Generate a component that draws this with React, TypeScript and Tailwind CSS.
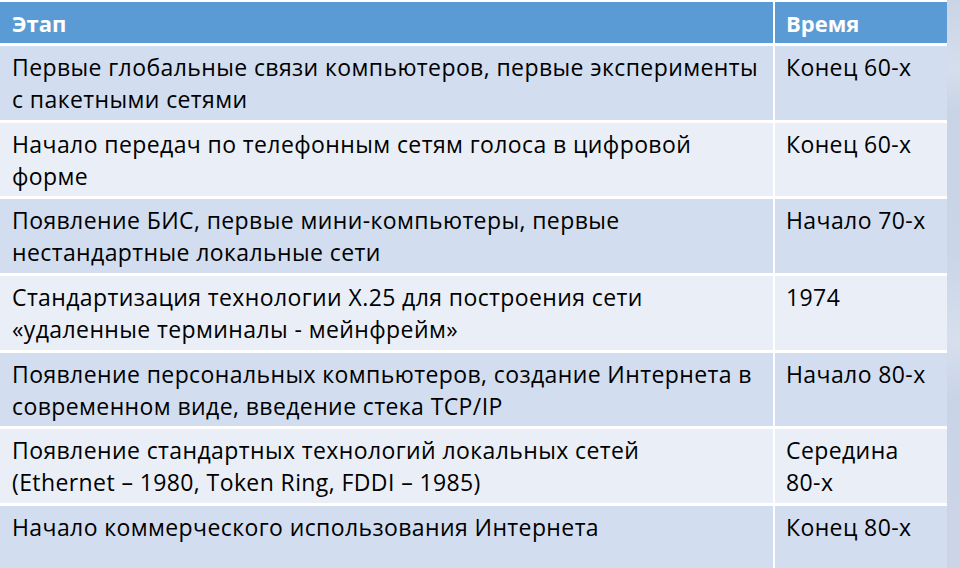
const ROWS = [
  { stage: "Первые глобальные связи компьютеров, первые эксперименты с пакетными сетями", time: "Конец 60-х" },
  { stage: "Начало передач по телефонным сетям голоса в цифровой форме", time: "Конец 60-х" },
  { stage: "Появление БИС, первые мини-компьютеры, первые нестандартные локальные сети", time: "Начало 70-х" },
  { stage: "Стандартизация технологии X.25 для построения сети «удаленные терминалы - мейнфрейм»", time: "1974" },
  { stage: "Появление персональных компьютеров, создание Интернета в современном виде, введение стека TCP/IP", time: "Начало 80-х" },
  // nbsp keeps "(Ethernet –" together, as in the slide
  { stage: "Появление стандартных технологий локальных сетей (Ethernet\u00a0– 1980, Token Ring, FDDI – 1985)", time: "Середина 80-х" },
  { stage: "Начало коммерческого использования Интернета", time: "Конец 80-х" },
];

export default function App() {
  return (
    <div
      className="w-[960px] h-[568px] overflow-hidden flex bg-white"
      style={{ fontFamily: '"Open Sans", "Noto Sans", sans-serif' }}
    >
      <div className="w-[947px] shrink-0 pt-[2px] flex flex-col gap-[3px] bg-white">
        <div className="grid grid-cols-[773px_172px] gap-x-[2px] h-[41px] shrink-0">
          <div className="bg-[#5b9bd5] text-white font-bold text-[22px] leading-[30px] pl-[12px] pt-[6px]">Этап</div>
          <div className="bg-[#5b9bd5] text-white font-bold text-[22px] leading-[30px] pl-[11px] pt-[6px]">Время</div>
        </div>
        {ROWS.map((r, i) => (
          <div key={i} className="grid grid-cols-[773px_172px] gap-x-[2px] h-[73.7px] shrink-0">
            <div
              className={`${i % 2 === 0 ? "bg-[#d2deef]" : "bg-[#eaeff7]"} text-black text-[23px] tracking-[0.4px] leading-[32px] pl-[12px] pr-[8px] pt-[5px]`}
            >
              {r.stage}
            </div>
            <div
              className={`${i % 2 === 0 ? "bg-[#d2deef]" : "bg-[#eaeff7]"} text-black text-[23px] tracking-[0.4px] leading-[32px] pl-[11px] pr-[8px] pt-[5px]`}
            >
              {r.time}
            </div>
          </div>
        ))}
      </div>
      <div className="flex-1 h-full bg-[linear-gradient(180deg,#c9d4e6_0%,#d5deec_12%,#c8d3e5_20%,#cad5e7_45%,#d7dfed_60%,#c9d4e6_70%,#cbd5e7_100%)]" />
    </div>
  );
}
